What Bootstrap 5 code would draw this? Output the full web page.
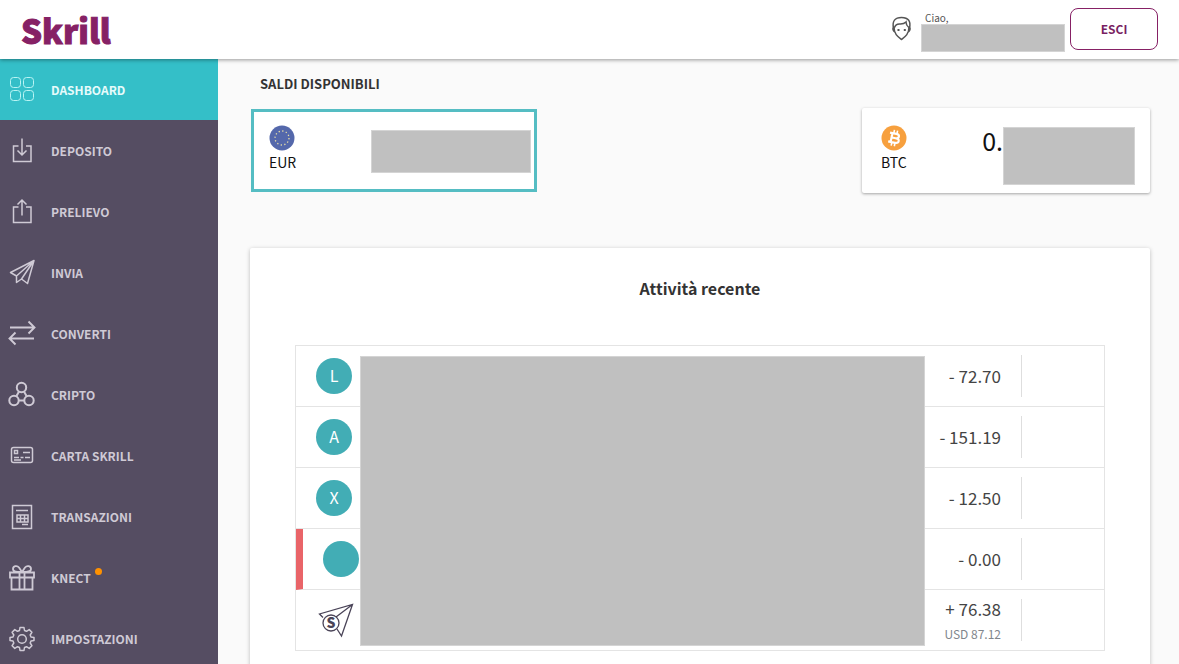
<!DOCTYPE html>
<html lang="it">
<head>
<meta charset="utf-8">
<meta name="viewport" content="width=device-width, initial-scale=1">
<title>Skrill - Dashboard</title>
<link href="https://cdn.jsdelivr.net/npm/bootstrap@5.3.0/dist/css/bootstrap.min.css" rel="stylesheet">
<style>
body { font-family: "Noto Sans CJK SC", "Open Sans", sans-serif; font-size: 14px; line-height: 20px; background: #fafafa; color: #333; }
a { text-decoration: none; }
svg { fill: none; stroke: currentColor; display: block; flex: none; }
.redacted { background: #c0c0c0; border: 1px solid #d4d4d4; }
.top-bar { height: 59px; background: #fff; box-shadow: 0 1px 4px rgba(0,0,0,.4); z-index: 2; padding: 0 21px; }
.brand { font-size: 33px; font-weight: 900; line-height: 60px; color: #862165; -webkit-text-stroke: 1px #862165; }
.person { color: #555; stroke-width: 1.5; }
.greeting { font-size: 10px; line-height: 12px; color: #555; margin-right: 5px; }
.greeting span { padding-left: 4px; }
.greeting .redacted { width: 144px; height: 28px; }
.btn-exit { width: 88px; height: 42px; border: 1px solid #862165; border-radius: 8px; background: #fff; color: #7a1f63; font-size: 12px; font-weight: 700; padding: 0; }
.side-menu { width: 218px; background: #554d62; }
.side-menu a { color: #cfcad5; font-size: 12px; font-weight: 700; line-height: 28px; padding: 16px 8px; gap: 15px; height: 61px; }
.side-menu a span { padding-top: 1px; }
.side-menu svg { stroke-width: 1.5; }
.side-menu a.active { background: #34bfc8; color: #e6fbfb; }
.side-menu a.active svg { stroke: #b9f4f4; stroke-width: 1; }
.notice-dot { top: 5px; left: 44px; width: 7px; height: 7px; background: #ff9100; }
.content { padding: 15px 29px 0 32px; }
.section-title { font-size: 13px; font-weight: 700; line-height: 20px; margin: 0 0 14px 10px; }
.balance { width: 288px; height: 85px; background: #fff; color: #111; border-radius: 2px; box-shadow: 0 1px 3px rgba(0,0,0,.35); padding: 17px 15px 0 19px; }
.balance.selected { width: 286px; height: 83px; margin: 1px; border: 3px solid #55bdc3; border-radius: 0; box-shadow: none; padding: 13px 3px 0 15px; }
.currency { font-size: 14px; line-height: 22px; }
.amount-eur { width: 160px; height: 43px; margin-top: 5px; }
.amount-btc { width: 132px; height: 58px; margin-top: 2px; }
.balance-start { font-size: 25px; line-height: 30px; }
.activity { background: #fff; margin-top: 55px; padding: 29px 45px; border-radius: 2px; box-shadow: 0 1px 4px rgba(0,0,0,.25); }
.activity h1 { font-size: 16px; font-weight: 700; line-height: 22px; margin: 0 0 46px; }
.moves { border: 1px solid #e4e4e4; }
.move { height: 61px; border-bottom: 1px solid #e4e4e4; padding-left: 20px; }
.move:last-child { height: 60px; border-bottom: 0; }
.move.flagged { border-left: 7px solid #e96468; }
.avatar { width: 36px; height: 36px; background: #42adb5; color: #fff; font-size: 16px; line-height: 34px; }
.sent { color: #4a4458; stroke-width: 1.3; }
.sum { font-size: 17px; line-height: 24px; color: #444; padding-right: 20px; }
.sum small { font-size: 12px; line-height: 26px; color: #81868c; }
.actions { width: 83px; height: 42px; border-left: 1px solid #dedede; }
.moves-cover { top: 10px; left: 64px; right: 179px; bottom: 4px; }
</style>
</head>
<body>
<div class="d-flex flex-column vh-100 overflow-hidden">
  <header class="top-bar d-flex justify-content-between position-relative flex-shrink-0">
    <a class="brand" href="#">Skrill</a>
    <div class="d-flex align-items-start pt-2">
      <svg class="person mt-2 me-2" width="22" height="26" viewBox="0 0 22 26"><path d="M2.500 12C1 5 4 1.500 10.500 1.500c7 0 9.500 4 8 10.500M3 11C3 18 6.500 20.500 10.500 23.500c4-3 7.500-5.500 7.500-12.500M3.500 11.500C4.500 8.500 6 7.500 9.500 8c2.500 0 4.500-1 5.500-2 0 3 1 4 2.800 5.500M2 11.500q-.5 3 2 4.500M19 11.500q.5 3-2 4.500"/><path d="M7.500 13v2M13.800 13v2" stroke-width="2"/></svg>
      <div class="greeting d-flex flex-column pt-1">
        <span>Ciao,</span>
        <div class="redacted"></div>
      </div>
      <button class="btn-exit" type="button">ESCI</button>
    </div>
  </header>
  <div class="d-flex flex-grow-1 overflow-hidden">
    <nav class="side-menu flex-shrink-0">
      <a class="d-flex active" href="#"><svg width="28" height="28"><rect x="2.500" y="2.500" width="10" height="10" rx="3"/><rect x="15.500" y="2.500" width="10" height="10" rx="3"/><rect x="2.500" y="15.500" width="10" height="10" rx="3"/><rect x="15.500" y="15.500" width="10" height="10" rx="3"/></svg><span>DASHBOARD</span></a>
      <a class="d-flex" href="#"><svg width="28" height="28"><path d="M10.500 10H5.500v15.500h17.500V10h-5M14 2.500V19M9.500 14.500l4.500 4.500 4.500-4.500"/></svg><span>DEPOSITO</span></a>
      <a class="d-flex" href="#"><svg width="28" height="28"><path d="M10.500 10H5.500v15.500h17.500V10h-5M14 3v15.500M9.500 7.500 14 3l4.500 4.500"/></svg><span>PRELIEVO</span></a>
      <a class="d-flex" href="#"><svg width="28" height="28" stroke-linejoin="round"><path d="M26 2.500 2.500 14.500l6 3.500zM26 2.500 19.500 25.500l-6-4.500zM26 2.500 8.500 18v6.500l5-3.500z"/></svg><span>INVIA</span></a>
      <a class="d-flex" href="#"><svg width="28" height="28"><path d="M2 8.500h24.500M20.500 2.500l6 6-6 6M26 19.500H1.500M7.500 13.500l-6 6 6 6" stroke-width="1.900"/></svg><span>CONVERTI</span></a>
      <a class="d-flex" href="#"><svg width="28" height="28"><g stroke-width="2"><circle cx="13.500" cy="7.500" r="4.700"/><circle cx="6" cy="20.500" r="4.700"/><circle cx="21" cy="20.500" r="4.700"/><path d="M11 11.500 8.500 16M16 11.500l2.500 4.500M11 20.500h5"/></g></svg><span>CRIPTO</span></a>
      <a class="d-flex" href="#"><svg width="28" height="28"><rect x="3.500" y="6.500" width="21" height="15" rx="2"/><rect x="6.500" y="9.500" width="3" height="3"/><path d="M15 11.500h7M6 16.500h5m1.500 0h3m1.500 0h5M6 19h7" stroke-width="1.300"/></svg><span>CARTA SKRILL</span></a>
      <a class="d-flex" href="#"><svg width="28" height="28"><rect x="4.500" y="3.500" width="19" height="23"/><path d="M8 8.500h12M14 22.500h6M9 13h11v7H9zM9 16.500h11M12.500 13v7M16.500 13v7"/></svg><span>TRANSAZIONI</span></a>
      <a class="d-flex" href="#"><svg width="28" height="28"><path stroke-width="1.800" d="M2 9.500h24v5H2zM3.500 14.500v12h21v-12M11.500 9.500v17M16.500 9.500v17M13 9C9 9 5 9 5 6s4-4 6-1.500l3 4.500M15 9c4 0 8 0 8-3s-4-4-6-1.500L14 9"/></svg><span class="position-relative">KNECT<i class="notice-dot position-absolute rounded-circle"></i></span></a>
      <a class="d-flex" href="#"><svg width="28" height="28"><circle cx="14" cy="15" r="4.300"/><path stroke-linejoin="round" d="M12 3.500h4l.5 3 2 .8 2.700-1.700 2.700 2.700-1.700 2.700.8 2 3 .5v3l-3 .5-.8 2 1.700 2.700-2.700 2.700-2.700-1.700-2 .8-.5 3h-4l-.5-3-2-.8-2.700 1.700-2.700-2.700 1.700-2.700-.8-2-3-.5v-3l3-.5.8-2-1.700-2.700 2.700-2.700 2.700 1.700 2-.8z"/></svg><span>IMPOSTAZIONI</span></a>
    </nav>
    <main class="content flex-grow-1">
      <h2 class="section-title">SALDI DISPONIBILI</h2>
      <div class="d-flex justify-content-between">
        <section class="balance selected d-flex justify-content-between">
          <div class="currency">
            <svg width="26" height="26"><circle cx="13" cy="13" r="12.500" fill="#5468ab" stroke="none"/><circle cx="13" cy="13" r="7" stroke="#e8dfa8" stroke-width="1.300" stroke-dasharray="1.300 2.365"/></svg>
            EUR
          </div>
          <div class="redacted amount-eur"></div>
        </section>
        <section class="balance d-flex justify-content-between">
          <div class="currency">
            <svg width="26" height="26"><circle cx="13" cy="13" r="12.500" fill="#f7a03e" stroke="none"/><g transform="rotate(12 13 13)" stroke="#fff" stroke-width="2.200"><path d="M8 8.500h6.500q3 0 3 2.200t-3 2.200H11M10.500 8.500v9M8 17.500h7q3.200 0 3.200-2.400T15 12.900"/><path d="M11.800 5v3.500M15 5v3.500M11.800 17.500V21M15 17.500V21" stroke-width="1.600"/></g></svg>
            BTC
          </div>
          <div class="d-flex"><span class="balance-start">0.</span><div class="redacted amount-btc"></div></div>
        </section>
      </div>
      <section class="activity">
        <h1 class="text-center">Attività recente</h1>
        <div class="moves position-relative">
          <ul class="list-unstyled m-0">
            <li class="move d-flex align-items-center"><span class="avatar rounded-circle text-center">L</span><span class="sum ms-auto">- 72.70</span><span class="actions"></span></li>
            <li class="move d-flex align-items-center"><span class="avatar rounded-circle text-center">A</span><span class="sum ms-auto">- 151.19</span><span class="actions"></span></li>
            <li class="move d-flex align-items-center"><span class="avatar rounded-circle text-center">X</span><span class="sum ms-auto">- 12.50</span><span class="actions"></span></li>
            <li class="move flagged d-flex align-items-center"><span class="avatar rounded-circle"></span><span class="sum ms-auto">- 0.00</span><span class="actions"></span></li>
            <li class="move d-flex align-items-center">
              <svg class="sent" width="40" height="36" viewBox="0 0 40 36"><path d="M7 15.500 3.500 12 36.500 2.500 25.500 34 21 27M36.500 2.500 20 15"/><circle cx="15" cy="21" r="8"/><text x="15" y="26" text-anchor="middle" font-size="14" font-weight="900" fill="#4a4458" stroke="none">S</text></svg>
              <span class="sum ms-auto d-flex flex-column text-end pt-1">+ 76.38<small>USD 87.12</small></span><span class="actions"></span>
            </li>
          </ul>
          <div class="redacted moves-cover position-absolute"></div>
        </div>
      </section>
    </main>
  </div>
</div>
<script src="https://cdn.jsdelivr.net/npm/bootstrap@5.3.0/dist/js/bootstrap.bundle.min.js"></script>
</body>
</html>
